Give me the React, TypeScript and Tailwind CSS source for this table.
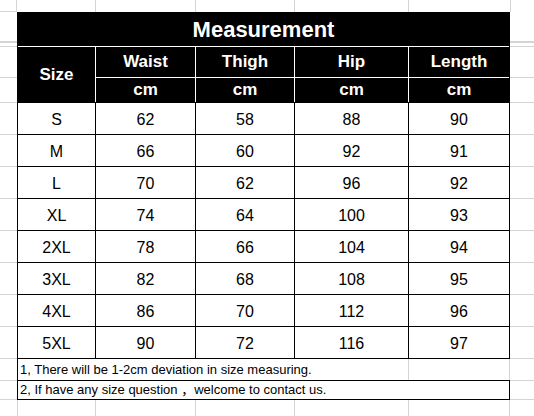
const font = { fontFamily: '"Liberation Sans", Arial, "Noto Sans CJK SC", sans-serif' }

const rows = [
  ['S', '62', '58', '88', '90'],
  ['M', '66', '60', '92', '91'],
  ['L', '70', '62', '96', '92'],
  ['XL', '74', '64', '100', '93'],
  ['2XL', '78', '66', '104', '94'],
  ['3XL', '82', '68', '108', '95'],
  ['4XL', '86', '70', '112', '96'],
  ['5XL', '90', '72', '116', '97'],
]

function Gutter({ first }: { first?: boolean }) {
  return (
    <div className="flex flex-col h-full border-[#d4d4d4]">
      <div className={first ? 'h-[12px] border-b border-r border-[#d4d4d4]' : 'h-[12px] border-l border-[#d4d4d4]'} />
      <div className="h-[31px] border-b-2 border-[#d4d4d4]" />
      <div className="h-[4px] border-b border-[#d4d4d4]" />
      <div className="h-[31px] border-b border-[#d4d4d4]" />
      <div className="h-[25px] border-b border-[#d4d4d4]" />
      {rows.map((r) => (
        <div key={r[0]} className="h-[32px] border-b border-[#d4d4d4]" />
      ))}
      <div className="h-[22px] border-b border-[#d4d4d4]" />
      <div className="h-[19px] border-b border-[#d4d4d4]" />
      <div className="flex-1" />
    </div>
  )
}

export default function App() {
  return (
    <div className="w-[534px] h-[416px] bg-white flex overflow-hidden text-black" style={font}>
      {/* left gutter */}
      <div className="w-[17px] shrink-0">
        <Gutter first />
      </div>

      {/* sheet */}
      <div className="w-[493px] shrink-0 flex flex-col">
        {/* top strip gridlines */}
        <div className="h-[12px] flex">
          <div className="w-[78px]" />
          <div className="w-[100px] border-l border-[#d4d4d4]" />
          <div className="w-[99px] border-l border-[#d4d4d4]" />
          <div className="w-[114px] border-l border-[#d4d4d4]" />
          <div className="w-[101px] border-l border-[#d4d4d4]" />
          <div className="w-[1px]" />
        </div>

        {/* header */}
        <div className="grid grid-cols-[77px_99px_98px_113px_100px] grid-rows-[33px_30px_24px] gap-px bg-white border-x border-t border-black text-white font-bold">
          <div className="col-span-5 bg-black flex items-center justify-center text-[22px]">Measurement</div>
          <div className="row-span-2 bg-black flex items-center justify-center text-[17px]">Size</div>
          <div className="bg-black flex items-center justify-center text-[17px]">Waist</div>
          <div className="bg-black flex items-center justify-center text-[17px]">Thigh</div>
          <div className="bg-black flex items-center justify-center text-[17px]">Hip</div>
          <div className="bg-black flex items-center justify-center text-[17px]">Length</div>
          <div className="bg-black flex items-center justify-center text-[17px]">cm</div>
          <div className="bg-black flex items-center justify-center text-[17px]">cm</div>
          <div className="bg-black flex items-center justify-center text-[17px]">cm</div>
          <div className="bg-black flex items-center justify-center text-[17px]">cm</div>
        </div>

        {/* data */}
        <div className="grid grid-cols-[77px_99px_98px_113px_100px] auto-rows-[31px] gap-px bg-black border border-black text-[16px]">
          {rows.map((r) =>
            r.map((v, i) => (
              <div key={r[0] + i} className="bg-white flex items-center justify-center pt-[2px]">
                {v}
              </div>
            ))
          )}
        </div>

        {/* notes */}
        <div className="h-[21px] flex text-[13px]">
          <div className="w-[391px] border-l border-black pl-[2px] flex items-center whitespace-nowrap">
            1, There will be 1-2cm deviation in size measuring.
          </div>
          <div className="w-[101px] border-l border-[#d4d4d4]" />
          <div className="w-[1px] bg-[#d4d4d4]" />
        </div>
        <div className="h-[20px] border border-black pl-[2px] flex items-center whitespace-nowrap text-[13px]">
          2, If have any size question ，welcome to contact us.
        </div>

        {/* bottom strip gridlines */}
        <div className="flex-1 flex">
          <div className="w-[78px] border-l border-[#d4d4d4]" />
          <div className="w-[100px] border-l border-[#d4d4d4]" />
          <div className="w-[99px] border-l border-[#d4d4d4]" />
          <div className="w-[114px] border-l border-[#d4d4d4]" />
          <div className="w-[101px] border-l border-[#d4d4d4]" />
          <div className="w-[1px] bg-[#d4d4d4]" />
        </div>
      </div>

      {/* right gutter */}
      <div className="flex-1">
        <Gutter />
      </div>
    </div>
  )
}
